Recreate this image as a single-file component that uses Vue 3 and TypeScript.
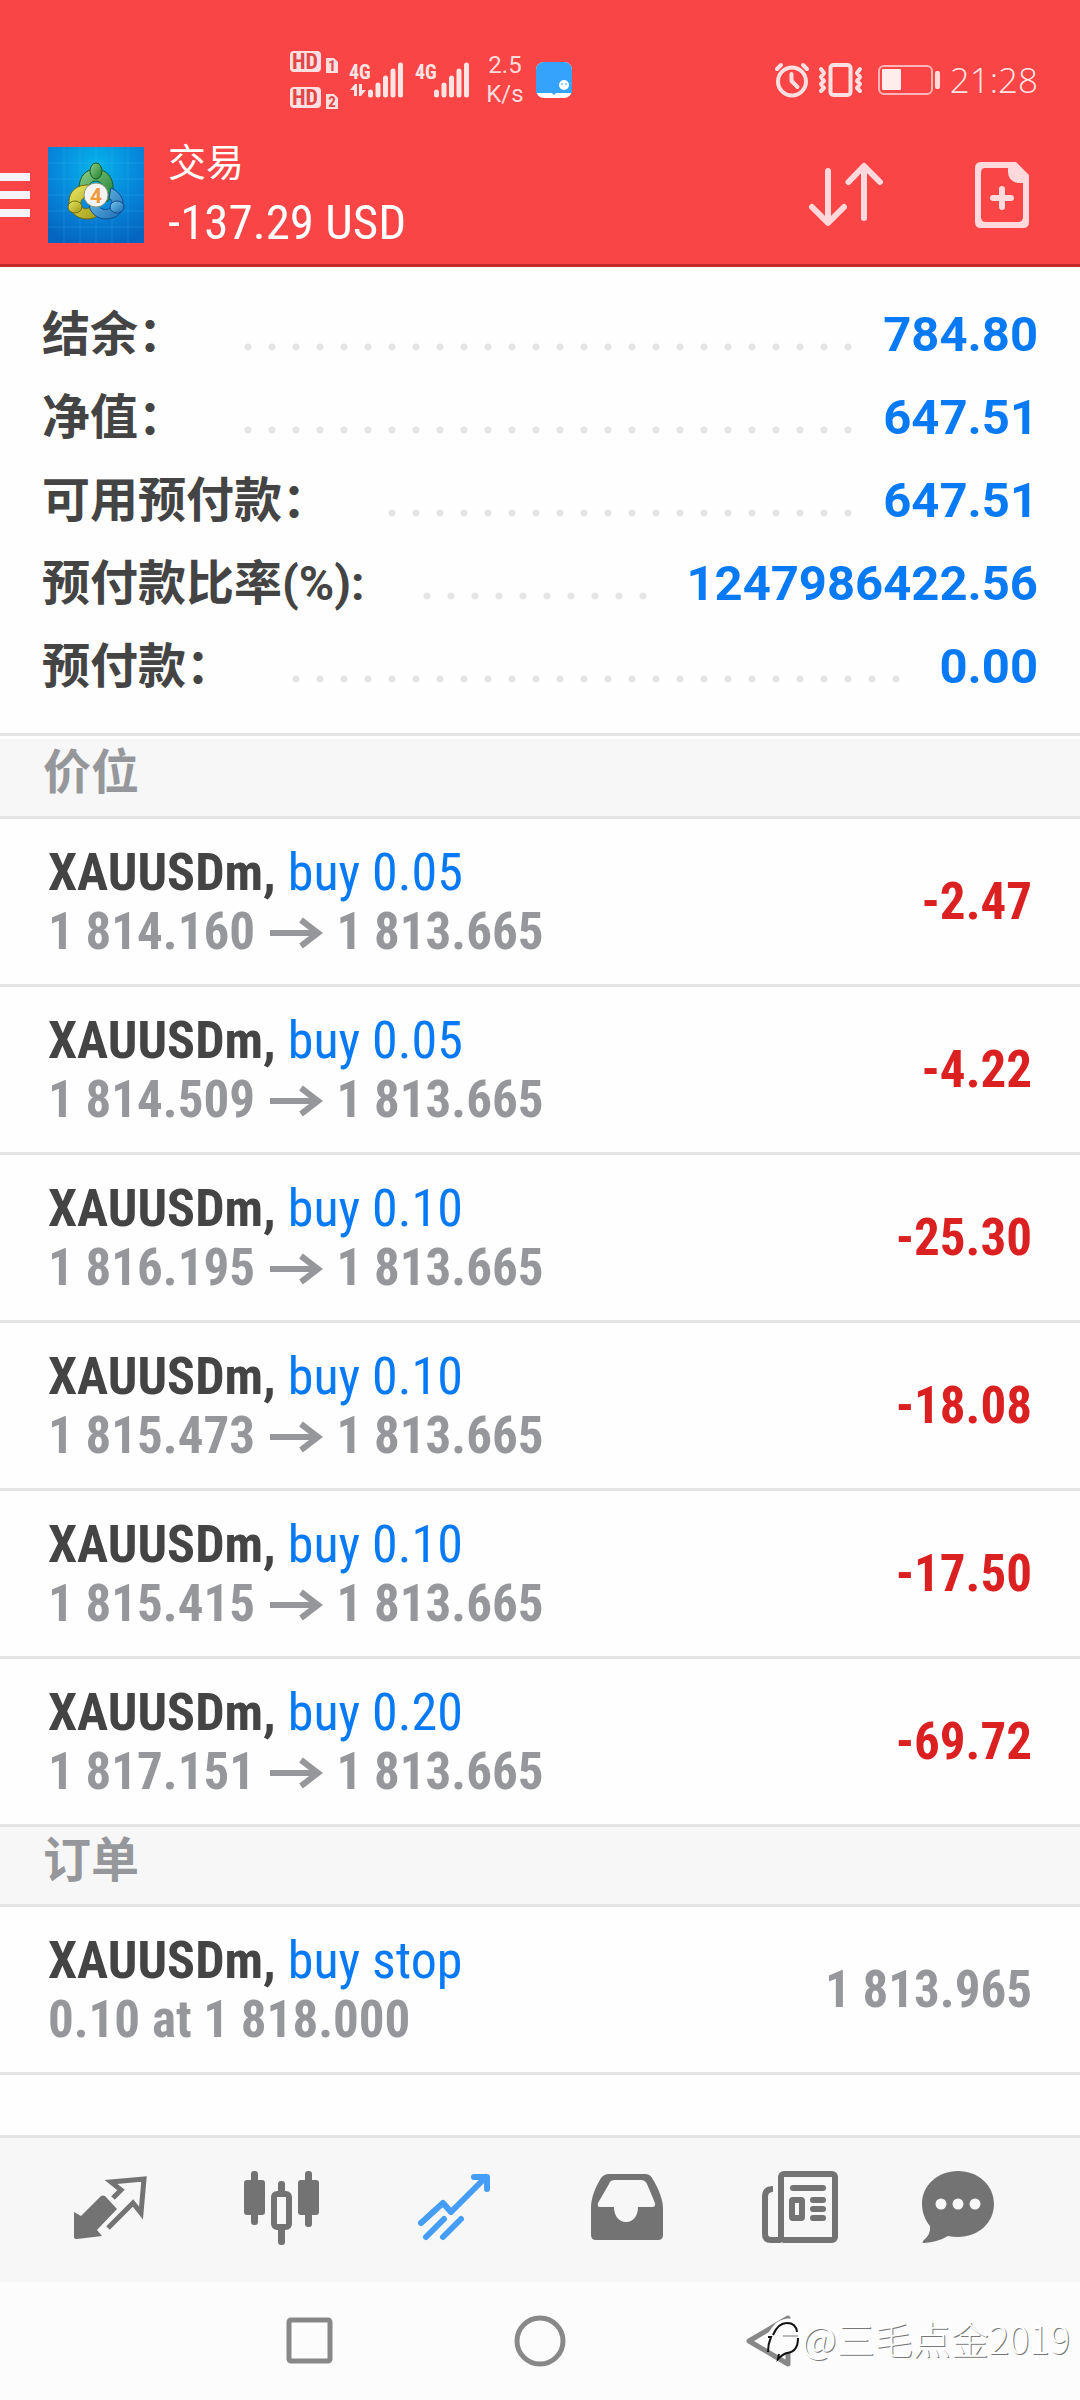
<script setup lang="ts">
interface SummaryRow {
  label: string
  value: string
}

interface Position {
  symbol: string
  side: string
  open: string
  current: string
  profit: string
}

interface Order {
  symbol: string
  side: string
  detail: string
  price: string
}

const summary: SummaryRow[] = [
  { label: '结余：', value: '784.80' },
  { label: '净值：', value: '647.51' },
  { label: '可用预付款：', value: '647.51' },
  { label: '预付款比率(%):', value: '1247986422.56' },
  { label: '预付款：', value: '0.00' },
]

const positions: Position[] = [
  { symbol: 'XAUUSDm,', side: 'buy 0.05', open: '1 814.160', current: '1 813.665', profit: '-2.47' },
  { symbol: 'XAUUSDm,', side: 'buy 0.05', open: '1 814.509', current: '1 813.665', profit: '-4.22' },
  { symbol: 'XAUUSDm,', side: 'buy 0.10', open: '1 816.195', current: '1 813.665', profit: '-25.30' },
  { symbol: 'XAUUSDm,', side: 'buy 0.10', open: '1 815.473', current: '1 813.665', profit: '-18.08' },
  { symbol: 'XAUUSDm,', side: 'buy 0.10', open: '1 815.415', current: '1 813.665', profit: '-17.50' },
  { symbol: 'XAUUSDm,', side: 'buy 0.20', open: '1 817.151', current: '1 813.665', profit: '-69.72' },
]

const orders: Order[] = [
  { symbol: 'XAUUSDm,', side: 'buy stop', detail: '0.10 at 1 818.000', price: '1 813.965' },
]
</script>

<template>
  <div class="screen">
    <header class="top">
      <div class="status">
        <div class="status-left">
          <svg class="hd" width="48" height="60" viewBox="0 0 48 60">
            <rect x="0" y="1" width="31" height="21" rx="4" />
            <text class="hd-text" x="15" y="19" text-anchor="middle">HD</text>
            <path d="M36 8h8l4 4v11H36z" />
            <text class="sim-text" x="42" y="21" text-anchor="middle">1</text>
            <rect x="0" y="37" width="31" height="21" rx="4" />
            <text class="hd-text" x="15" y="55" text-anchor="middle">HD</text>
            <path d="M36 44h8l4 4v11H36z" />
            <text class="sim-text" x="42" y="57" text-anchor="middle">2</text>
          </svg>
          <svg class="signal" width="54" height="36" viewBox="0 0 54 36">
            <text class="net-text" x="-1" y="17">4G</text>
            <path d="M0 28l5-6h2v12H4v-6zM9 22h3v6h4l-5 6H9z" class="traffic" />
            <path d="M20.500 30v3M28 23v10M35.500 16v17M43 9v24M50.500 3v30" class="bars" />
          </svg>
          <svg class="signal" width="54" height="36" viewBox="0 0 54 36">
            <text class="net-text" x="-1" y="17">4G</text>
            <path d="M20.500 30v3M28 23v10M35.500 16v17M43 9v24M50.500 3v30" class="bars" />
          </svg>
          <div class="speed"><span>2.5</span><span>K/s</span></div>
          <svg class="notice" width="36" height="36" viewBox="0 0 36 36">
            <rect width="36" height="36" rx="8" fill="#fff" />
            <path d="M8 0h20a8 8 0 0 1 8 8v23H20l-2 2-2-2H0V8a8 8 0 0 1 8-8z" fill="#35a3fb" />
            <circle cx="28" cy="23" r="5" fill="#fff" />
            <path d="M25 22h2M29 22h2" stroke="#35a3fb" stroke-width="1" />
          </svg>
        </div>
        <div class="status-right">
          <svg width="34" height="34" viewBox="0 0 34 34" class="line">
            <circle cx="17" cy="18.500" r="14" />
            <path d="M16.500 11v7l6 6M2 6l4-4M32 6l-4-4" />
          </svg>
          <svg width="43" height="34" viewBox="0 0 43 34" class="line">
            <rect x="11.500" y="2" width="20" height="30" rx="3" />
            <path d="M2 6l3 4-3 4 3 4-3 3 3 4-3 3M41 6l-3 4 3 4-3 4 3 3-3 4 3 3" />
          </svg>
          <svg class="battery" width="62" height="30" viewBox="0 0 62 30">
            <rect x="1" y="1" width="53" height="28" rx="5" fill="none" stroke="#ffb5b5" stroke-width="2" />
            <rect x="4" y="4" width="19" height="21" rx="1" fill="#ffecec" />
            <rect x="57" y="6" width="5" height="18" rx="2" fill="#ffdada" />
          </svg>
          <time class="clock">21:28</time>
        </div>
      </div>

      <div class="appbar">
        <button class="menu" type="button" aria-label="菜单"><i></i><i></i><i></i></button>
        <svg class="logo" width="96" height="96" viewBox="0 0 96 96">
          <defs>
            <radialGradient id="sky" cx="0.5" cy="0.2" r="0.85">
              <stop offset="0" stop-color="#06b3ea" />
              <stop offset="0.5" stop-color="#0689dc" />
              <stop offset="1" stop-color="#0565c0" />
            </radialGradient>
            <linearGradient id="green" x1="0" y1="0" x2="1" y2="1">
              <stop offset="0" stop-color="#8fd08a" />
              <stop offset="1" stop-color="#1d7d2c" />
            </linearGradient>
            <linearGradient id="yellow" x1="0" y1="0" x2="1" y2="1">
              <stop offset="0" stop-color="#ece860" />
              <stop offset="1" stop-color="#9d9714" />
            </linearGradient>
            <linearGradient id="blue" x1="0" y1="0" x2="1" y2="1">
              <stop offset="0" stop-color="#7cc8f2" />
              <stop offset="1" stop-color="#1568ae" />
            </linearGradient>
          </defs>
          <rect width="96" height="96" fill="url(#sky)" />
          <path d="M16 0v96M32 0v96M48 0v96M64 0v96M80 0v96M0 16h96M0 32h96M0 48h96M0 64h96M0 80h96" stroke="#4fc0f0" stroke-opacity="0.2" />
          <path d="M31 42c0-14 8-20 17-20s18 8 17 20c0 6-3 10-6 13l-5-10c3-5-1-11-6-11s-8 4-6 8l-2 4z" fill="url(#green)" stroke="#175c2a" stroke-width="1" />
          <path d="M42 38c-13-1-21 6-21 17 0 10 8 17 18 17 8 0 13-4 14-9l-9-5c-3 5-10 5-11 0s2-8 7-8z" fill="url(#yellow)" stroke="#6f6b10" stroke-width="1" />
          <path d="M63 41c9 4 13 11 12 18-1 8-8 13-17 13-8 0-15-5-17-13l9-1c3 5 9 6 12 3s3-7-1-10z" fill="url(#blue)" stroke="#124d8c" stroke-width="1" />
          <ellipse cx="48" cy="24" rx="6" ry="8" fill="url(#green)" stroke="#175c2a" stroke-width="1" />
          <ellipse cx="27" cy="60" rx="7" ry="6" fill="url(#yellow)" stroke="#6f6b10" stroke-width="1" />
          <ellipse cx="69" cy="60" rx="7" ry="6" fill="url(#blue)" stroke="#124d8c" stroke-width="1" />
          <circle cx="48" cy="48" r="12" fill="#f4f4f2" stroke="#8a9a80" stroke-width="1" />
          <text class="logo-text" x="48" y="56" text-anchor="middle">4</text>
        </svg>
        <div class="titles">
          <h1>交易</h1>
          <p>-137.29 USD</p>
        </div>
        <button class="tool" type="button" aria-label="排序">
          <svg width="96" height="96" viewBox="0 0 96 96" class="tool-line">
            <path d="M30 24v51M14 60l16 16 16-16M66 71V20M50.500 35L66 19l16 16" />
          </svg>
        </button>
        <button class="tool" type="button" aria-label="新订单">
          <svg width="96" height="96" viewBox="0 0 96 96">
            <path
              fill="#ffd9dc"
              fill-rule="evenodd"
              d="M27 15h35l13 13v47q0 6-6 6H27q-6 0-6-6V21q0-6 6-6zM31 21q-4 0-4 5v44q0 5 5 5h32q5 0 5-5V36h-5q-10-2-10-11v-4z"
            />
            <path d="M48 42v18M39 51h18" class="tool-line" />
          </svg>
        </button>
      </div>
    </header>

    <main class="content">
      <dl class="summary">
        <div v-for="row in summary" :key="row.label" class="summary-row">
          <dt>{{ row.label }}</dt>
          <span class="dots"></span>
          <dd>{{ row.value }}</dd>
        </div>
      </dl>

      <section class="group first">
        <h2>价位</h2>
        <ul>
          <li v-for="(item, index) in positions" :key="index" class="deal">
            <div class="deal-text">
              <p class="deal-title"><b>{{ item.symbol }}</b> {{ item.side }}</p>
              <p class="deal-sub">
                {{ item.open }}
                <svg class="arrow" width="52" height="28" viewBox="0 0 52 28">
                  <path d="M0 14h48M31 1l17 13-17 13" />
                </svg>
                {{ item.current }}
              </p>
            </div>
            <strong class="loss">{{ item.profit }}</strong>
          </li>
        </ul>
      </section>

      <section class="group">
        <h2>订单</h2>
        <ul>
          <li v-for="(item, index) in orders" :key="index" class="deal">
            <div class="deal-text">
              <p class="deal-title"><b>{{ item.symbol }}</b> {{ item.side }}</p>
              <p class="deal-sub">{{ item.detail }}</p>
            </div>
            <strong class="quote">{{ item.price }}</strong>
          </li>
        </ul>
      </section>
    </main>

    <nav class="tabs">
      <button type="button" aria-label="行情">
        <svg width="96" height="96" viewBox="0 0 96 96">
          <path d="M12 50l7 4 20-20q2-1 4 0l12 13-20 21 5 6-25 3q-3 0-3-2z" fill="#737373" />
          <path d="M51 36l8-8-10-8 33-3-3 34-8-10-25 25" fill="none" stroke="#737373" stroke-width="5" />
        </svg>
      </button>
      <button type="button" aria-label="图表">
        <svg width="96" height="96" viewBox="0 0 96 96" fill="#737373">
          <rect x="10" y="18" width="21" height="35" rx="3" />
          <rect x="17" y="9" width="7" height="54" rx="3" />
          <rect x="64" y="18" width="21" height="35" rx="3" />
          <rect x="71" y="9" width="7" height="56" rx="3" />
          <rect x="44" y="19" width="7" height="14" rx="3" />
          <rect x="44" y="64" width="7" height="19" rx="3" />
          <rect x="40" y="32" width="15" height="33" rx="3" fill="none" stroke="#737373" stroke-width="6" />
        </svg>
      </button>
      <button type="button" aria-label="交易" aria-current="page">
        <svg width="96" height="96" viewBox="0 0 96 96" class="trend">
          <path d="M15 61l22-20 8 9 35-35M68 15h13v12M20 75l18-18M37 75l18-18" />
        </svg>
      </button>
      <button type="button" aria-label="历史">
        <svg width="96" height="96" viewBox="0 0 96 96">
          <path
            fill="#737373"
            fill-rule="evenodd"
            d="M31 12h36q5 0 7 4c7 11 11 22 11 30v27q0 5-5 5H18q-5 0-5-5V46c0-10 4-20 10-30q3-4 8-4zM37 18q-5 0-6 4L20 41q-1 4 2 4h14c0 8 4 15 12 15s12-7 12-15h14q4 0 3-4l-8-19q-2-4-6-4z"
          />
        </svg>
      </button>
      <button type="button" aria-label="新闻">
        <svg width="96" height="96" viewBox="0 0 96 96" fill="#737373">
          <rect x="31" y="12" width="54" height="66" rx="3" fill="none" stroke="#737373" stroke-width="6" />
          <path d="M23 27q-8 0-8 8v37q0 6 6 6h10" fill="none" stroke="#737373" stroke-width="6" />
          <rect x="40" y="23" width="36" height="6" rx="3" />
          <rect x="42" y="38" width="10" height="18" rx="1" fill="none" stroke="#737373" stroke-width="6" />
          <rect x="60" y="35" width="16" height="6" rx="3" />
          <rect x="60" y="44" width="16" height="6" rx="3" />
          <rect x="60" y="53" width="16" height="6" rx="3" />
        </svg>
      </button>
      <button type="button" aria-label="消息">
        <svg width="96" height="96" viewBox="0 0 96 96">
          <path d="M36 9c20 0 36 14 36 33S56 75 36 75q-5 0-10-1-10 6-24 7-3 0 0-3 7-6 6-14C3 58 0 50 0 42 0 23 16 9 36 9z" fill="#737373" />
          <g fill="#f7f7f7">
            <circle cx="19" cy="42" r="5.500" />
            <circle cx="36" cy="42" r="5.500" />
            <circle cx="53" cy="42" r="5.500" />
          </g>
        </svg>
      </button>
    </nav>

    <footer class="system">
      <button type="button" aria-label="最近任务">
        <svg width="52" height="52" viewBox="0 0 52 52" class="sys-line"><rect x="5" y="5" width="41" height="41" rx="2" /></svg>
      </button>
      <button type="button" aria-label="主页">
        <svg width="52" height="52" viewBox="0 0 52 52" class="sys-line"><circle cx="26" cy="26" r="23" /></svg>
      </button>
      <button type="button" aria-label="返回">
        <svg width="52" height="52" viewBox="0 0 52 52" class="sys-line"><path d="M44 3v46L5 26z" /></svg>
      </button>
      <div class="watermark">
        <svg width="38" height="46" viewBox="0 0 38 46">
          <path d="M2 22q5-9 10-14 8-6 18-4l6 10v18L26 38l-12-2L0 26z" fill="#fcfcfc" />
          <path d="M4 37q0-8 3-15H4M9 20q5-12 14-12 9 0 10 9M34 23q0 14-11 15-4 1-9 6l1-5" fill="none" stroke="#111" stroke-width="2" />
          <path d="M19 21h15" stroke="#777" stroke-width="1" />
        </svg>
        <span>@三毛点金2019</span>
      </div>
    </footer>
  </div>
</template>

<style>
body {
  margin: 0;
  background: #fefefe;
}
</style>

<style scoped>
.screen {
  display: flex;
  flex-direction: column;
  min-height: 100vh;
  background: #fefefe;
  font-family: Roboto, "Noto Sans CJK SC", sans-serif;
  color: #444;
}

button {
  display: flex;
  padding: 0;
  border: 0;
  background: none;
}

svg {
  display: block;
  flex: none;
  overflow: visible;
}

h1,
h2,
p,
ul,
dl,
dd {
  margin: 0;
  padding: 0;
}

ul {
  list-style: none;
}

.top {
  background: #f94545;
  border-bottom: 3px solid #c02c2c;
}

.status {
  display: flex;
  justify-content: space-between;
  align-items: center;
  height: 92px;
  padding: 34px 42px 0 290px;
}

.status-left,
.status-right {
  display: flex;
  align-items: center;
}

.status-left {
  gap: 12px;
}

.status-right {
  gap: 10px;
}

.hd {
  fill: #ffdfdf;
}

.hd-text,
.sim-text,
.net-text {
  font-family: "Roboto Condensed", Roboto, sans-serif;
  font-weight: 700;
  fill: #e04747;
}

.hd-text {
  font-size: 22px;
}

.sim-text {
  font-size: 15px;
}

.net-text {
  font-size: 20px;
  fill: #ffe4e4;
}

.signal + .speed {
  margin-left: 4px;
}

.bars {
  fill: none;
  stroke: #ffe4e4;
  stroke-width: 5;
  stroke-linecap: round;
}

.traffic {
  fill: #ffe4e4;
}

.speed {
  display: flex;
  flex-direction: column;
  align-items: center;
  width: 38px;
  font-size: 24px;
  line-height: 29px;
  color: #ffdada;
}

.line {
  fill: none;
  stroke: #ffe0e0;
  stroke-width: 4;
  stroke-linecap: round;
  stroke-linejoin: round;
}

.battery {
  margin-left: 6px;
}

.clock {
  font-family: "Open Sans", sans-serif;
  font-size: 35px;
  line-height: 46px;
  font-weight: 300;
  color: #ffe4e4;
}

.appbar {
  display: flex;
  align-items: center;
  height: 138px;
  padding-right: 30px;
}

.menu {
  flex-direction: column;
  gap: 10px;
  width: 30px;
  margin-right: 18px;
}

.menu i {
  height: 8px;
  background: #f6f2fb;
}

.titles {
  flex: 1;
  margin-left: 24px;
  color: #fff;
}

.titles h1 {
  font-size: 38px;
  line-height: 56px;
  font-weight: 400;
}

.titles p {
  font-family: "Roboto Condensed", "Liberation Sans Narrow", Roboto, sans-serif;
  font-size: 49px;
  line-height: 64px;
}

.logo-text {
  font-size: 21px;
  font-weight: 700;
  fill: #f09a3e;
}

.tool + .tool {
  margin-left: 60px;
}

.tool-line {
  fill: none;
  stroke: #ffd9dc;
  stroke-width: 6;
  stroke-linecap: round;
  stroke-linejoin: round;
}

.content {
  flex: 1;
}

.summary {
  padding: 26px 42px 25px;
  border-bottom: 3px solid #e4e4e4;
}

.summary-row {
  display: flex;
  align-items: center;
  font-size: 48px;
  line-height: 83px;
  font-weight: 700;
}

.dots {
  flex: 1;
  height: 8px;
  margin: 24px 28px 0 58px;
  background: radial-gradient(circle at 4px 4px, #e5e5e5 3px, transparent 4px) 0 0 / 24px 8px repeat-x;
}

.summary dd {
  font-size: 49px;
  color: #087af6;
}

.first {
  margin-top: 3px;
}

.group h2 {
  height: 77px;
  padding-left: 43px;
  border-bottom: 3px solid #e4e4e4;
  background: #f7f7f7;
  font-size: 48px;
  line-height: 68px;
  font-weight: 700;
  color: #96979b;
}

.deal {
  display: flex;
  align-items: center;
  justify-content: space-between;
  height: 165px;
  padding: 0 48px;
  border-bottom: 3px solid #e4e4e4;
  font-family: "Roboto Condensed", "Liberation Sans Narrow", Roboto, sans-serif;
  font-size: 51px;
  line-height: 59px;
}

.deal-title {
  font-size: 52px;
  color: #087af6;
}

.deal-title b {
  color: #444;
}

.deal-sub {
  font-weight: 700;
  color: #96979b;
}

.arrow {
  display: inline-block;
  margin: 0 3px;
  vertical-align: 2px;
  fill: none;
  stroke: #96979b;
  stroke-width: 6;
}

.loss {
  color: #da2020;
}

.quote {
  color: #96979b;
}

.tabs {
  display: flex;
  padding: 24px;
  border-top: 3px solid #e4e4e4;
  background: #f7f7f7;
}

.tabs button {
  flex: 1;
  justify-content: center;
}

.trend {
  fill: none;
  stroke: #459df5;
  stroke-width: 6;
  stroke-linecap: round;
  stroke-linejoin: round;
}

.system {
  position: relative;
  display: flex;
  justify-content: center;
  align-items: center;
  gap: 178px;
  height: 118px;
  background: #fcfcfc;
}

.sys-line {
  fill: none;
  stroke: #888;
  stroke-width: 5;
  stroke-linejoin: round;
}

.watermark {
  position: absolute;
  right: 10px;
  bottom: 38px;
  display: flex;
  align-items: center;
  font-family: "Noto Sans CJK SC", sans-serif;
  font-size: 38px;
  line-height: 48px;
  font-weight: 300;
  color: #fff;
  text-shadow: 1px 1px 0 #777;
}
</style>
